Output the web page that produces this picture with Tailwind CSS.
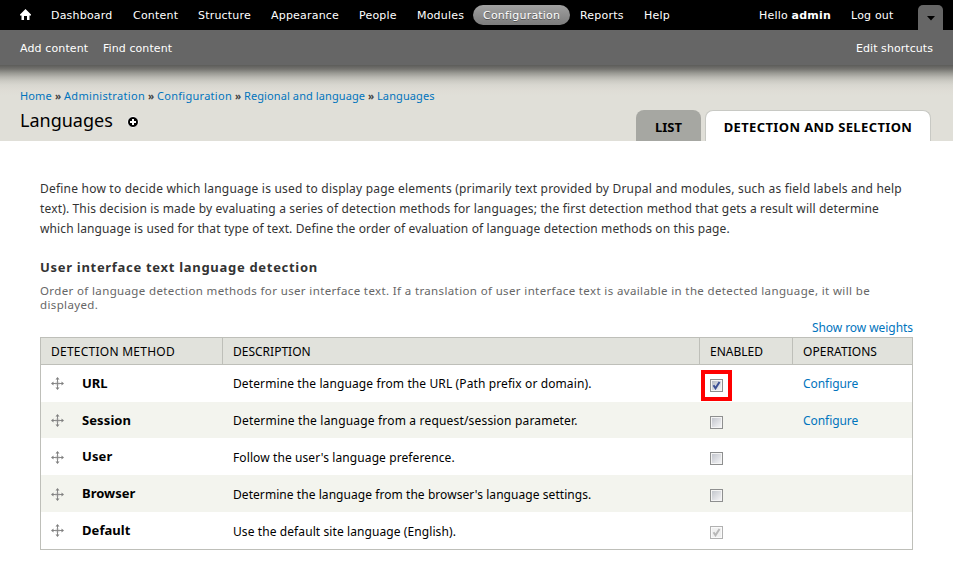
<!DOCTYPE html>
<html lang="en">
<head>
<meta charset="utf-8">
<title>Languages</title>
<script src="https://cdn.jsdelivr.net/npm/@tailwindcss/browser@4"></script>
</head>
<body class="w-[953px] h-[571px] overflow-hidden bg-white font-['Noto_Sans',sans-serif] text-[12px] text-black">
<svg class="hidden">
  <symbol id="move" viewBox="0 0 13 13"><path d="M6.500 1v11M1 6.500h11" stroke="#888" stroke-width="1" fill="none"/><path d="M6.500 0l2 2.500h-4zM6.500 13l2-2.500h-4zM0 6.500l2.500-2v4zM13 6.500l-2.500-2v4z" fill="#808080"/><path d="M5 5h3v3H5z" fill="none" stroke="#aaa" stroke-width=".5"/></symbol>
  <symbol id="tick" viewBox="0 0 9 9"><path d="M1.500 4.300L3.500 7.300L7.500 1" fill="none" stroke="currentColor" stroke-width="2"/></symbol>
</svg>
<header class="font-['DejaVu_Sans',sans-serif] text-[11px] tracking-[0.2px] text-white">
  <nav class="h-[30px] bg-black flex items-center leading-[20px] whitespace-nowrap">
    <a class="w-[41px] pl-[20px]"><svg class="w-[11px] h-[11px] -mt-[1px]" viewBox="0 0 11 11"><path d="M5.500 0L11 5.500V6.500H9.500V11H7V7H4V11H1.500V6.500H0V5.500z" fill="#fff"/></svg></a>
    <a class="w-[82px] px-[10px] pt-[2px]">Dashboard</a>
    <a class="w-[65px] px-[10px] pt-[2px]">Content</a>
    <a class="w-[73px] px-[10px] pt-[2px]">Structure</a>
    <a class="w-[88px] px-[10px] pt-[2px]">Appearance</a>
    <a class="w-[58px] px-[10px] pt-[2px]">People</a>
    <a class="w-[66px] px-[10px] pt-[2px]">Modules</a>
    <a class="w-[97px] h-[20px] px-[10px] leading-[22px] rounded-full bg-linear-to-b from-[#a0a0a0] to-[#7c7c7c] [text-shadow:0_1px_0_#555]">Configuration</a>
    <a class="w-[64px] px-[10px] pt-[2px]">Reports</a>
    <a class="w-[115px] px-[10px] pt-[2px]">Help</a>
    <a class="w-[92px] px-[10px] pt-[2px]">Hello <b>admin</b></a>
    <a class="w-[77px] px-[10px] pt-[2px]">Log out</a>
    <a class="w-[25px] h-[25px] mt-[5px] rounded-t-[5px] bg-[#666] flex justify-center pt-[11px]"><svg class="w-[8px] h-[5px]" viewBox="0 0 8 5"><path d="M0 0h8L4 4.500z" fill="#000"/></svg></a>
  </nav>
  <div class="h-[35px] bg-[#666] flex items-center gap-[15px] px-[20px] pt-[3px]">
    <a class="w-[68px] whitespace-nowrap tracking-[0.120px]">Add content</a><a class="whitespace-nowrap tracking-[0.080px]">Find content</a><a class="ml-auto tracking-[0.060px]">Edit shortcuts</a>
  </div>
</header>
<section class="h-[76px] bg-[#e0dfd8] bg-[linear-gradient(to_bottom,#5c5c59_0px,#74736f_4px,#989892_8px,#b6b5af_12px,#cccbc4_16px,#d8d7d0_20px,#dedcd5_25px,#e0dfd8_30px)] flex justify-between pl-[20px] pr-[22px]">
  <div class="pt-[23px]">
    <div class="flex text-[11px] leading-[16px] text-[#0074bd] whitespace-nowrap">
      <a class="w-[35px] tracking-[0.150px]">Home</a><b class="w-[9px] text-[#444] text-[10px]">»</b>
      <a class="w-[84px] tracking-[0.320px]">Administration</a><b class="w-[9px] text-[#444] text-[10px]">»</b>
      <a class="w-[78px] tracking-[0.280px]">Configuration</a><b class="w-[9px] text-[#444] text-[10px]">»</b>
      <a class="w-[124px] tracking-[0.100px]">Regional and language</a><b class="w-[9px] text-[#444] text-[10px]">»</b>
      <a class="tracking-[0.100px]">Languages</a>
    </div>
    <div class="flex items-center h-[32px]">
      <h1 class="w-[107px] text-[18px] leading-[32px]">Languages</h1>
      <svg class="w-[12px] h-[12px] mt-[4px]" viewBox="0 0 12 12"><circle cx="6" cy="6" r="5.500" fill="#000" stroke="#fff"/><path d="M6 3v6M3 6h6" stroke="#fff" stroke-width="2"/></svg>
    </div>
  </div>
  <div class="flex items-end gap-[4px] text-[13px] font-bold leading-[34px] text-center whitespace-nowrap">
    <a class="w-[65px] h-[31px] rounded-t-[8px] bg-[#a6a7a2]">LIST</a>
    <a class="w-[226px] h-[31px] rounded-t-[8px] bg-white border border-b-0 border-[#c8c9c4] leading-[33px] tracking-[0.380px]">DETECTION AND SELECTION</a>
  </div>
</section>
<main class="px-[40px] pt-[38px]">
  <p class="leading-[20px] text-[#333] whitespace-nowrap">
    <span class="block tracking-[0.210px]">Define how to decide which language is used to display page elements (primarily text provided by Drupal and modules, such as field labels and help</span>
    <span class="block tracking-[0.150px]">text). This decision is made by evaluating a series of detection methods for languages; the first detection method that gets a result will determine</span>
    <span class="block tracking-[0.120px]">which language is used for that type of text. Define the order of evaluation of language detection methods on this page.</span>
  </p>
  <h2 class="mt-[18px] text-[13px] leading-[20px] font-bold text-[#333] tracking-[0.700px]">User interface text language detection</h2>
  <p class="mt-[7px] text-[11.5px] leading-[14px] text-[#666] whitespace-nowrap"><span class="block tracking-[0.367px]">Order of language detection methods for user interface text. If a translation of user interface text is available in the detected language, it will be</span><span class="block tracking-[0.367px]">displayed.</span></p>
  <a class="block mt-[7px] h-[18px] leading-[18px] text-right text-[#0074bd] tracking-[-0.060px]">Show row weights</a>
  <div class="w-[873px] border border-[#bebfb9]">
    <div class="grid grid-cols-[182px_477px_93px_119px] h-[27px] bg-[#e1e2dc] border-b border-[#bebfb9] leading-[27px]">
      <div class="pl-[10px] border-r border-[#bebfb9] tracking-[0.250px]">DETECTION METHOD</div>
      <div class="pl-[10px] border-r border-[#bebfb9]">DESCRIPTION</div>
      <div class="pl-[10px] border-r border-[#bebfb9]">ENABLED</div>
      <div class="pl-[10px] tracking-[0.060px]">OPERATIONS</div>
    </div>
    <div class="grid grid-cols-[41px_141px_477px_93px_119px] h-[37px] leading-[37px]">
      <svg class="w-[13px] h-[13px] ml-[10px] mt-[12px]"><use href="#move"/></svg>
      <b class="text-[13px]">URL</b>
      <span class="pl-[10px] tracking-[0.110px]">Determine the language from the URL (Path prefix or domain).</span>
      <div class="pl-[1px] pt-[5px]"><div class="w-[31px] h-[31px] border-4 border-[#f00] p-[5px]"><div class="w-[13px] h-[13px] border border-[#8e8f8f] bg-[#f4f4f4] p-px text-[#3b4f95]"><svg class="w-[9px] h-[9px] bg-linear-to-br from-[#b5bac5] to-[#f4f4f6]"><use href="#tick"/></svg></div></div></div>
      <a class="pl-[10px] text-[#0074bd] tracking-[-0.060px]">Configure</a>
    </div>
    <div class="grid grid-cols-[41px_141px_477px_93px_119px] h-[36px] leading-[37px] bg-[#f3f4ee]">
      <svg class="w-[13px] h-[13px] ml-[10px] mt-[12px]"><use href="#move"/></svg>
      <b class="text-[13px] tracking-[0.100px]">Session</b>
      <span class="pl-[10px] tracking-[0.180px]">Determine the language from a request/session parameter.</span>
      <div class="pl-[10px] pt-[14px]"><div class="w-[13px] h-[13px] border border-[#8e8f8f] bg-[#f4f4f4] p-px"><div class="w-[9px] h-[9px] bg-linear-to-br from-[#c3c6cd] to-[#f4f4f6]"></div></div></div>
      <a class="pl-[10px] text-[#0074bd] tracking-[-0.060px]">Configure</a>
    </div>
    <div class="grid grid-cols-[41px_141px_477px_93px_119px] h-[37px] leading-[39px]">
      <svg class="w-[13px] h-[13px] ml-[10px] mt-[13px]"><use href="#move"/></svg>
      <b class="text-[13px] leading-[37px] tracking-[0.100px]">User</b>
      <span class="pl-[10px] tracking-[0.100px]">Follow the user's language preference.</span>
      <div class="pl-[10px] pt-[14px]"><div class="w-[13px] h-[13px] border border-[#8e8f8f] bg-[#f4f4f4] p-px"><div class="w-[9px] h-[9px] bg-linear-to-br from-[#c3c6cd] to-[#f4f4f6]"></div></div></div>
    </div>
    <div class="grid grid-cols-[41px_141px_477px_93px_119px] h-[37px] leading-[39px] bg-[#f3f4ee]">
      <svg class="w-[13px] h-[13px] ml-[10px] mt-[13px]"><use href="#move"/></svg>
      <b class="text-[13px] leading-[37px]">Browser</b>
      <span class="pl-[10px] tracking-[0.060px]">Determine the language from the browser's language settings.</span>
      <div class="pl-[10px] pt-[14px]"><div class="w-[13px] h-[13px] border border-[#8e8f8f] bg-[#f4f4f4] p-px"><div class="w-[9px] h-[9px] bg-linear-to-br from-[#c3c6cd] to-[#f4f4f6]"></div></div></div>
    </div>
    <div class="grid grid-cols-[41px_141px_477px_93px_119px] h-[37px] leading-[39px]">
      <svg class="w-[13px] h-[13px] ml-[10px] mt-[12px]"><use href="#move"/></svg>
      <b class="text-[13px] leading-[37px] tracking-[0.060px]">Default</b>
      <span class="pl-[10px] tracking-[0.090px]">Use the default site language (English).</span>
      <div class="pl-[10px] pt-[14px]"><div class="w-[13px] h-[13px] border border-[#b1b1b1] bg-[#fafafa] p-px text-[#b8b8b8]"><svg class="w-[9px] h-[9px] bg-[#f0f0f0]"><use href="#tick"/></svg></div></div>
    </div>
  </div>
</main>
</body>
</html>
